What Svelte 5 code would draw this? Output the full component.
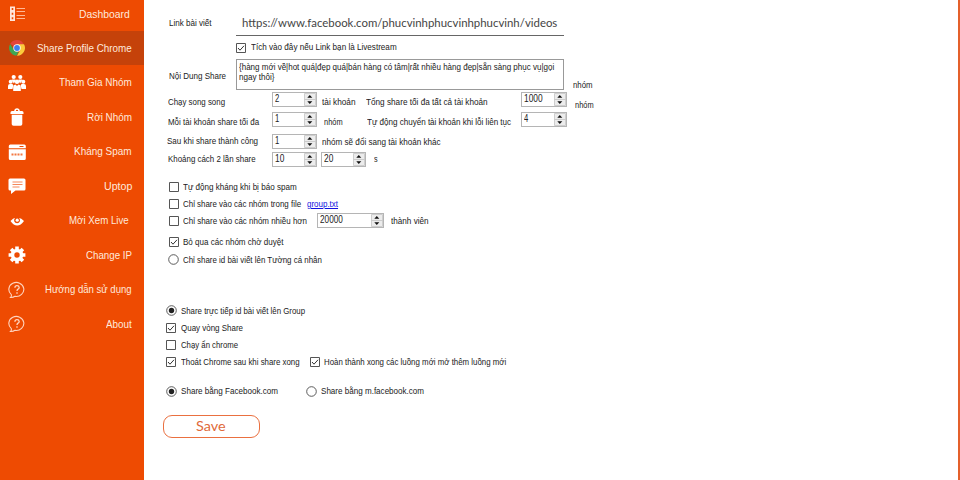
<script>
  const menu = [
    { icon: 'list', label: 'Dashboard', w: 51, end: 14 },
    { icon: 'chrome', label: 'Share Profile Chrome', w: 95, active: true },
    { icon: 'people', label: 'Tham Gia Nhóm', w: 73 },
    { icon: 'trash', label: 'Rời Nhóm', w: 45 },
    { icon: 'spam', label: 'Kháng Spam', w: 58 },
    { icon: 'chat', label: 'Uptop', w: 28 },
    { icon: 'eye', label: 'Mời Xem Live', w: 60, end: 15 },
    { icon: 'gear', label: 'Change IP', w: 46 },
    { icon: 'help', label: 'Hướng dẫn sử dụng', w: 87 },
    { icon: 'help', label: 'About', w: 26 }
  ];

  const text = (x, w, value, dy = 0) => ({ kind: 'text', x, w, value, dy });
  const spin = (x, w, value) => ({ kind: 'spin', x, w, value, dy: 0 });
  const check = (x, on = false) => ({ kind: 'check', x, w: 10, on, dy: 0 });
  const radio = (x, on = false) => ({ kind: 'radio', x, w: 11, on, dy: 0 });

  // y: top of the row, h: its height; x is measured from the window's left edge
  const rows = [
    { y: 10, h: 26, items: [text(169, 43, 'Link bài viết'), { kind: 'url', x: 236, w: 328, dy: 0, value: 'https://www.facebook.com/phucvinhphucvinhphucvinh/videos' }] },
    { y: 40, h: 15, items: [check(236, true), text(251, 146, 'Tích vào đây nếu Link bạn là Livestream')] },
    { y: 59, h: 31, items: [text(169, 57, 'Nội Dung Share', 2), { kind: 'area', x: 236, w: 328, dy: 0 }, text(573, 20, 'nhóm', 11)] },
    { y: 92, h: 15, items: [text(168, 57, 'Chạy song song', 3), spin(272, 45, '2'), text(322, 34, 'tài khoản', 3), text(366, 122, 'Tổng share tối đa tất cả tài khoản', 3), spin(521, 46, '1000'), text(575, 19, 'nhóm', 6)] },
    { y: 112, h: 15, items: [text(168, 91, 'Mỗi tài khoản share tối đa', 3), spin(272, 45, '1'), text(324, 19, 'nhóm', 3), text(367, 144, 'Tự động chuyển tài khoản khi lỗi liên tục', 3), spin(521, 46, '4')] },
    { y: 134, h: 15, items: [text(167, 91, 'Sau khi share thành công'), spin(272, 45, '1'), text(322, 119, 'nhóm sẽ đổi sang tài khoản khác', 1)] },
    { y: 152, h: 15, items: [text(168, 88, 'Khoảng cách 2 lần share'), spin(272, 45, '10'), spin(321, 45, '20'), text(374, 4, 's')] },
    { y: 179, h: 15, items: [check(169), text(183, 114, 'Tự động kháng khi bị báo spam', 1)] },
    { y: 196, h: 15, items: [check(169), text(183, 118, 'Chỉ share vào các nhóm trong file', 1), { kind: 'link', x: 307, w: 31, value: 'group.txt', dy: 1 }] },
    { y: 213, h: 15, items: [check(169), text(183, 124, 'Chỉ share vào các nhóm nhiều hơn', 1), spin(317, 67, '20000'), text(391, 38, 'thành viên', 1)] },
    { y: 234, h: 15, items: [check(169, true), text(183, 100, 'Bỏ qua các nhóm chờ duyệt', 1)] },
    { y: 252, h: 15, items: [radio(168), text(183, 139, 'Chỉ share id bài viết lên Tường cá nhân', 1)] },
    { y: 303, h: 15, items: [radio(166, true), text(181, 124, 'Share trực tiếp id bài viết lên Group', 1)] },
    { y: 320, h: 15, items: [check(166, true), text(181, 62, 'Quay vòng Share', 1)] },
    { y: 337, h: 15, items: [check(166), text(181, 57, 'Chạy ẩn chrome', 1)] },
    { y: 354, h: 15, items: [check(166, true), text(181, 119, 'Thoát Chrome sau khi share xong', 1), check(310, true), text(324, 182, 'Hoàn thành xong các luồng mới mở thêm luồng mới', 1)] },
    { y: 384, h: 15, items: [radio(166, true), text(181, 97, 'Share bằng Facebook.com', 0), radio(306), text(321, 103, 'Share bằng m.facebook.com', 0)] }
  ].map((row, i, all) => ({
    ...row,
    gap: row.y - (i ? all[i - 1].y + all[i - 1].h : 0),
    items: row.items.map((it, j) => ({
      ...it,
      gap: it.x - (j ? row.items[j - 1].x + row.items[j - 1].w : 144)
    }))
  }));

  // squeezes or widens a line of text to the given width
  function fit(node, w) {
    node.style.transform = `scaleX(${w / node.offsetWidth})`;
  }
</script>

{#snippet line(value, w)}
  <span class="line" style:width="{w}px"><span class="ink" use:fit={w}>{value}</span></span>
{/snippet}

{#snippet icon(name)}
  <svg class="icon" viewBox="0 0 18 18" width="18" height="18" fill="#fff">
    {#if name === 'list'}
      <path fill-rule="evenodd" fill="#ffe6da" d="M2 1.500h5v14.500H2zM3.700 3v2h1.600v-2zM3.700 7.700v2h1.600v-2zM3.700 12.300v2h1.600v-2z" />
      <path stroke="#ffb893" stroke-width="1" d="M8.500 3.500H17M8.500 6.500H17M8.500 10.500H17M8.500 13.500H17" />
    {:else if name === 'chrome'}
      <path fill="#e2453a" d="M9 9 2.200 5A7.700 7.700 0 0 1 15.800 5.300z" />
      <path fill="#fbcb3c" d="M9 5.300h7A7.700 7.700 0 0 1 9 16.700L12.200 11z" />
      <path fill="#3fa652" d="M2.200 5 5.800 11 9 12.700l1.500.2L8.300 16.700A7.700 7.700 0 0 1 2.200 5z" />
      <circle cx="9" cy="9" r="3.700" fill="#fff" /><circle cx="9" cy="9" r="2.900" fill="#3f80ee" />
    {:else if name === 'people'}
      <circle cx="5.700" cy="3" r="2.100" /><circle cx="12.300" cy="3" r="2.100" />
      <circle cx="2.700" cy="7.700" r="2" /><circle cx="9" cy="7.700" r="2.200" /><circle cx="15.300" cy="7.700" r="2" />
      <path d="M3.500 5.500h4v1.300L6 9.500 4.800 8zM10.500 5.500h4L13 8.200l-1 1.300-1.500-2.700zM0 15v-3q0-2 2-2h2.500l.8 1.500L4.500 15zM18 15v-3q0-2-2-2h-2.500l-.8 1.500.8 3.500zM5.200 17V13q0-2.500 2.300-2.500L9 12l1.500-1.500q2.300 0 2.300 2.500v4z" />
    {:else if name === 'trash'}
      <path d="M2.500 4.500q0-1.500 1.500-1.500h2.200Q6.500.2 9 .2T11.800 3H14q1.500 0 1.500 1.500V6h-13zM7.800 3h2.400q0-1.200-1.200-1.200T7.800 3z" fill-rule="evenodd" />
      <path d="M3.700 6.700h10.600v9.300q0 1.800-1.800 1.800h-7q-1.800 0-1.800-1.800z" />
    {:else if name === 'spam'}
      <path d="M.8 3q0-1.500 1.500-1.500h14q1.500 0 1.500 1.500v2.200H.8zM.8 6.200h17V15.500q0 1.500-1.500 1.500H2.300Q.8 17 .8 15.500z" />
      <path stroke="#ee4b02" d="M11.500 3.500h4" />
      <path stroke="#ee4b02" stroke-width="2" stroke-dasharray="2 1" d="M3.500 11.400h12" opacity=".75" />
    {:else if name === 'chat'}
      <path d="M2 1.500h14q1.500 0 1.500 1.500v9q0 1.500-1.500 1.500H7.500L3 17v-3.500H2Q.5 13.500.5 12V3Q.5 1.500 2 1.500z" />
      <path stroke="#f47b49" stroke-width=".9" d="M4.500 5h10M4.500 7.500h10M4.500 10h7" />
    {:else if name === 'eye'}
      <path fill-rule="evenodd" d="M2.500 9Q5.500 5.800 7 6 5.800 7.300 6.200 9.300q.8 2 2.900 2T11.900 9.300q.5-2-.8-3.300 2 0 4.900 3Q12.800 13.500 9.200 13.500T2.500 9z" />
      <circle cx="9.200" cy="8.200" r="1.600" />
    {:else if name === 'gear'}
      <circle cx="9" cy="9" r="4.500" fill="none" stroke="#fff" stroke-width="3.600" />
      <g stroke="#fff" stroke-width="3.600"><path d="M9 .6v3M9 14.400v3M.6 9h3M14.400 9h3M3.100 3.100 5 5M13 13l1.900 1.900M3.100 14.900 5 13M13 5l1.900-1.900" /></g>
    {:else}
      <path fill="none" stroke="#ffd3bd" stroke-width="1.100" d="M3.300 13.600A7.500 7 0 1 1 7 15.300Q5.200 16.700 2.500 16.500 3.700 15.300 3.300 13.600z" />
      <path fill="none" stroke="#ffd9c6" stroke-width="1.300" d="M6.900 6.700Q7 4.700 9 4.700T11.200 6.500Q11.200 7.600 10 8.200 9 8.700 9 10M9 11.300v1.400" />
    {/if}
  </svg>
{/snippet}

<div class="window">
  <nav>
    {#each menu as m}
      <div class="entry" class:active={m.active} style:padding-right="{m.end ?? 12}px">
        {@render icon(m.icon)}
        {@render line(m.label, m.w)}
      </div>
    {/each}
  </nav>

  <main>
    {#each rows as row}
      <div class="row" style:margin-top="{row.gap}px" style:height="{row.h}px">
        {#each row.items as it}
          <div class="cell" style:margin-left="{it.gap}px" style:width="{it.w}px" style:margin-top="{it.dy * 2}px">
            {#if it.kind === 'text'}
              {@render line(it.value, it.w)}
            {:else if it.kind === 'link'}
              <span class="link">{@render line(it.value, it.w)}</span>
            {:else if it.kind === 'url'}
              <div class="url"><span class="ink" use:fit={315}>{it.value}</span></div>
            {:else if it.kind === 'area'}
              <div class="area">
                {@render line('{hàng mới về|hot quá|đẹp quá|bán hàng có tâm|rất nhiều hàng đẹp|sẵn sàng phục vụ|gọi', 315)}
                {@render line('ngay thôi}', 36)}
              </div>
            {:else if it.kind === 'spin'}
              <div class="spin">
                {@render line(it.value, it.value.length * 4.6)}
                <svg width="12" height="13" viewBox="0 0 12 13">
                  <path fill="#ececec" stroke="#c4c4c4" stroke-width=".8" d="M.5.500h11v12H.5zM.5 6.500h11" />
                  <path fill="#111" d="M3.300 4.700h5L5.800 2zM3.300 8.300h5L5.800 11z" />
                </svg>
              </div>
            {:else if it.kind === 'check'}
              <svg class="box" width="10" height="10" viewBox="0 0 10 10" fill="none">
                <path stroke="#555" d="M.5.500h9v9h-9z" />
                {#if it.on}<path stroke="#333" d="M2 5l2 2.200L8 2.800" />{/if}
              </svg>
            {:else}
              <svg class="box" width="11" height="11" viewBox="0 0 11 11" fill="none">
                <circle cx="5.500" cy="5.500" r="4.800" stroke="#4a4a4a" stroke-width=".9" />
                {#if it.on}<circle cx="5.500" cy="5.500" r="2.700" fill="#222" />{/if}
              </svg>
            {/if}
          </div>
        {/each}
      </div>
    {/each}
    <button><span class="ink" use:fit={30}>Save</span></button>
  </main>
</div>

<style>
  .window {
    box-sizing: border-box;
    display: flex;
    width: 960px;
    height: 480px;
    overflow: hidden;
    background: #fff;
    border-right: 2px solid #e4602b;
    font-family: 'Liberation Sans', Arial, sans-serif;
  }
  nav {
    flex: none;
    width: 144px;
    background: #ee4b02;
    color: #ffe9dc;
    font-size: 11px;
  }
  .entry {
    box-sizing: border-box;
    display: flex;
    align-items: center;
    justify-content: space-between;
    height: 34.500px;
    padding-left: 8px;
  }
  .entry:first-child {
    height: 31px;
    padding-bottom: 3px;
  }
  .entry.active {
    height: 33.500px;
    margin-bottom: 1px;
    padding-top: 1px;
    background: #c5420a;
  }
  .icon {
    flex: none;
    display: block;
  }
  .line {
    display: block;
    height: 15px;
    line-height: 15px;
    white-space: nowrap;
  }
  .ink {
    display: inline-block;
    transform-origin: 0 50%;
  }
  main {
    flex: 1;
    color: #222;
    font-size: 9px;
  }
  .row {
    display: flex;
    align-items: center;
  }
  .cell {
    flex: none;
  }
  .box {
    display: block;
  }
  .link {
    color: #1212e0;
  }
  .link .ink,
  .link :global(.ink) {
    text-decoration: underline;
  }
  .url {
    box-sizing: border-box;
    height: 26px;
    padding-left: 6px;
    border-bottom: 1px solid #666;
    font: 11px/26px Lato, sans-serif;
    color: #444;
    white-space: nowrap;
  }
  .area {
    box-sizing: border-box;
    height: 31px;
    padding: 1px 2px;
    border: 1px solid #999;
  }
  .area :global(.line) {
    height: 10px;
    line-height: 12px;
  }
  .spin {
    box-sizing: border-box;
    display: flex;
    justify-content: space-between;
    height: 15px;
    border: 1px solid #b5b5b5;
    padding-left: 2px;
    font-size: 10px;
  }
  .spin :global(.line) {
    line-height: 12px;
  }
  button {
    display: block;
    box-sizing: border-box;
    width: 97px;
    height: 23px;
    margin: 16px 0 0 19px;
    padding: 0 0 0 32px;
    border: 1px solid #ea7040;
    border-radius: 9px;
    background: #fff;
    color: #e06a3a;
    font: 13px/21px Lato, sans-serif;
    text-align: left;
  }
</style>
